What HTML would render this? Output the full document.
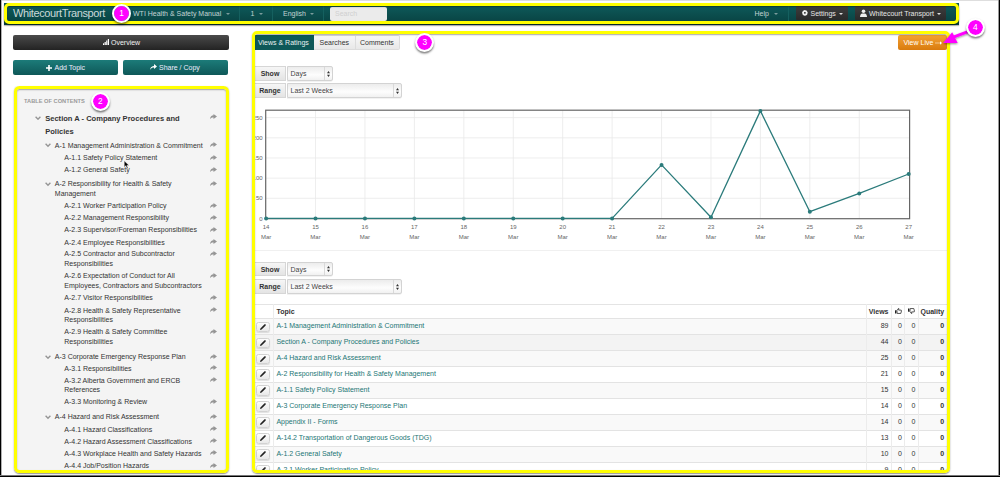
<!DOCTYPE html>
<html><head><meta charset="utf-8">
<style>
*{box-sizing:border-box;margin:0;padding:0}
html,body{width:1000px;height:477px;overflow:hidden;background:#fff}
body{position:relative;font-family:"Liberation Sans",sans-serif;font-size:7px;color:#333}
.a{position:absolute;white-space:nowrap}
.t{position:absolute;white-space:nowrap;line-height:10px;font-size:7px}
.nav{left:4px;top:3px;width:955px;height:21.5px;background:linear-gradient(#0f5d5e,#08403f);box-shadow:0 1px 1px rgba(0,0,0,.25)}
.navtxt{color:#c3d3d3}
.div1{position:absolute;top:3px;height:21px;width:1px;background:#0a4142;border-right:1px solid #15605f}
.caret{position:absolute;width:0;height:0;border-left:2px solid transparent;border-right:2px solid transparent;border-top:2.2px solid #7b9c9c}
.hl{position:absolute;border:3px solid #ffff00;box-shadow:0 1px 1.5px rgba(0,0,0,.45),inset 0 1px 1.5px rgba(0,0,0,.35)}
.circ{position:absolute;width:19px;height:19px;border-radius:50%;background:#ff00ff;background-clip:padding-box;border:2px solid #fff;box-shadow:0 1.5px 2px rgba(0,0,0,.5);color:#fff;font-size:8.4px;line-height:15.6px;text-align:center}
.btn-dark{background:linear-gradient(#4a4a4a,#232323);border-radius:2px}
.btn-teal{background:linear-gradient(#1c7b79,#0e5858);border-radius:2px}
.toc{left:14px;top:86px;width:215px;height:386px;background:#f4f4f4;border-radius:3px}
.sh{position:absolute;left:210px;width:7px;height:5px}
.chev{position:absolute;width:6px;height:4.5px}
.tocl{color:#333}
.lbl{position:absolute;background:linear-gradient(#f6f6f6,#e4e4e4);border:1px solid #d6d6d6;font-weight:bold;color:#333;font-size:7px;line-height:13.6px;text-align:center}
.sel{position:absolute;background:linear-gradient(#ececec,#fdfdfd 60%,#f1f1f1);border:1px solid #d3d3d3;border-radius:0 2px 2px 0;color:#444;font-size:7px;line-height:13.4px;padding-left:3px;box-shadow:0 0.5px 0.5px rgba(0,0,0,.1)}
.sel i{position:absolute;top:0;bottom:0;width:1px;background:#d9d9d9}
.row{position:absolute;left:255px;width:692px;height:16px;border-top:1px solid #e3e3e3}
.edit{position:absolute;left:255.8px;width:14.3px;height:10.5px;background:linear-gradient(#fdfdfd,#e9e9e9);border:1px solid #d2d2d2;border-radius:2.5px;box-shadow:0 1px 1px rgba(0,0,0,.12)}
.lnk{color:#237675}
.num{position:absolute;text-align:right;font-size:7px;line-height:10px;color:#333}
</style></head><body>

<!-- frame -->
<div class="a" style="left:0;top:0;width:1000px;height:1px;background:#dedede"></div>
<div class="a" style="left:0;top:0;width:1px;height:477px;background:#000"></div>
<div class="a" style="left:1px;top:0;width:1px;height:477px;background:#b0b0b0"></div>
<div class="a" style="left:999px;top:0;width:1px;height:477px;background:#000"></div>
<div class="a" style="left:998px;top:0;width:1px;height:477px;background:#9a9a9a"></div>
<div class="a" style="left:0;top:476px;width:1000px;height:1px;background:#000"></div>
<div class="a" style="left:0;top:475px;width:1000px;height:1px;background:#777"></div>

<!-- NAVBAR -->
<div class="a nav"></div>
<div class="t navtxt" style="left:13px;top:7px;font-size:11px;line-height:12px;letter-spacing:-0.38px;color:#c9d8d8">WhitecourtTransport</div>
<div class="t navtxt" style="left:133px;top:8.5px">WTI Health &amp; Safety Manual</div>
<div class="caret" style="left:225.5px;top:12.5px"></div>
<div class="div1" style="left:239px"></div>
<div class="t navtxt" style="left:250.5px;top:8.5px">1</div>
<div class="caret" style="left:258.5px;top:12.5px"></div>
<div class="div1" style="left:272px"></div>
<div class="t navtxt" style="left:283px;top:8.5px">English</div>
<div class="caret" style="left:310px;top:12.5px"></div>
<div class="div1" style="left:323px"></div>
<div class="a" style="left:330px;top:7px;width:57px;height:13.5px;background:#ebebeb;border-radius:2px"></div>
<div class="t" style="left:335px;top:8.5px;color:#d0d0d0">Search</div>

<div class="t navtxt" style="left:754.5px;top:8.5px">Help</div>
<div class="caret" style="left:773.5px;top:12.5px"></div>
<div class="div1" style="left:788px"></div>
<div class="a btn-dark" style="left:796px;top:6.3px;width:52px;height:13.6px;background:linear-gradient(#3e3e3e,#2a2a2a);border-radius:1px"></div>
<svg class="a" style="left:802.4px;top:9.9px" width="5.8" height="5.8" viewBox="0 0 14 14"><path fill="#eee" fill-rule="evenodd" d="M13.83,5.47 13.83,8.53 11.97,9.10 12.00,9.03 12.91,10.75 10.75,12.91 9.03,12.00 9.10,11.97 8.53,13.83 5.47,13.83 4.90,11.97 4.97,12.00 3.25,12.91 1.09,10.75 2.00,9.03 2.03,9.10 0.17,8.53 0.17,5.47 2.03,4.90 2.00,4.97 1.09,3.25 3.25,1.09 4.97,2.00 4.90,2.03 5.47,0.17 8.53,0.17 9.10,2.03 9.03,2.00 10.75,1.09 12.91,3.25 12.00,4.97 11.97,4.90z M7 4.9a2.1 2.1 0 1 0 0.01 0z"/></svg>
<div class="t" style="left:810.5px;top:8.5px;color:#e6e6e6">Settings</div>
<div class="caret" style="left:839px;top:12.5px;border-top-color:#ddd"></div>
<div class="a btn-dark" style="left:854.5px;top:6.3px;width:91.3px;height:13.6px;background:linear-gradient(#3e3e3e,#2a2a2a);border-radius:1px"></div>
<svg class="a" style="left:860px;top:9px" width="7" height="8" viewBox="0 0 14 16"><circle cx="7" cy="4.5" r="3.6" fill="#eee"/><path fill="#eee" d="M0 16c0-4 2-6.5 4.5-7h5c2.5.5 4.5 3 4.5 7z"/></svg>
<div class="t" style="left:869px;top:8.5px;color:#e6e6e6">Whitecourt Transport</div>
<div class="caret" style="left:936.5px;top:12.5px;border-top-color:#ddd"></div>

<div class="hl" style="left:4px;top:3px;width:955px;height:21px;border-radius:5px"></div>
<div class="circ" style="left:112.1px;top:4.1px">1</div>

<!-- SIDEBAR BUTTONS -->
<div class="a btn-dark" style="left:13px;top:35px;width:216px;height:15px"></div>
<svg class="a" style="left:103px;top:39px" width="6" height="6" viewBox="0 0 6 6"><rect x="0" y="4.3" width="1.2" height="1.7" fill="#fff"/><rect x="1.6" y="3" width="1.2" height="3" fill="#fff"/><rect x="3.2" y="1.5" width="1.2" height="4.5" fill="#fff"/><rect x="4.8" y="0" width="1.2" height="6" fill="#fff"/></svg>
<div class="t" style="left:111px;top:37.5px;color:#f0f0f0">Overview</div>

<div class="a btn-teal" style="left:13px;top:60px;width:104.5px;height:15px"></div>
<svg class="a" style="left:45.5px;top:64.5px" width="6" height="6" viewBox="0 0 6 6"><path d="M2.2 0h1.6v2.2H6v1.6H3.8V6H2.2V3.8H0V2.2h2.2z" fill="#fff"/></svg>
<div class="t" style="left:54.5px;top:62.5px;color:#eef">Add Topic</div>
<div class="a btn-teal" style="left:123px;top:60px;width:105px;height:15px"></div>
<svg class="a" style="left:150px;top:64px" width="7" height="6" viewBox="0 0 14 12"><path d="M0 12C1 6 4 4 8 4V0l6 5-6 5V7C5 7 2 8 0 12z" fill="#fff"/></svg>
<div class="t" style="left:159px;top:62.5px;color:#eef">Share / Copy</div>

<!-- TOC -->
<div class="a toc"></div>
<div class="t" style="left:24px;top:96.3px;font-size:5.7px;font-weight:bold;color:#9a9a9a">TABLE OF CONTENTS</div>

<div id="tocitems" style="position:absolute;left:0;top:0;width:230px;height:470px;overflow:hidden"><svg class="chev" style="left:35.0px;top:115.70px" width="6" height="4.5" viewBox="0 0 12 9"><polyline points="1.2,1.6 6,6.4 10.8,1.6" fill="none" stroke="#959595" stroke-width="2.8"/></svg><div class="t tocl" style="left:45.2px;top:113.57px;font-size:7.55px;font-weight:bold">Section A - Company Procedures and</div><div class="t tocl" style="left:45.2px;top:126.77px;font-size:7.55px;font-weight:bold">Policies</div><svg class="sh" style="top:114.40px" width="7" height="5" viewBox="0 0 14 10"><path d="M0 10.5C.3 5.5 2.8 2.6 7 2.6V0L14 5 7 10V7.2C3.8 7.2 1.8 8 0 10.5z" fill="#959595"/></svg><svg class="chev" style="left:44.6px;top:143.30px" width="6" height="4.5" viewBox="0 0 12 9"><polyline points="1.2,1.6 6,6.4 10.8,1.6" fill="none" stroke="#959595" stroke-width="2.8"/></svg><div class="t tocl" style="left:54.8px;top:140.57px;">A-1 Management Administration &amp; Commitment</div><svg class="sh" style="top:142.30px" width="7" height="5" viewBox="0 0 14 10"><path d="M0 10.5C.3 5.5 2.8 2.6 7 2.6V0L14 5 7 10V7.2C3.8 7.2 1.8 8 0 10.5z" fill="#959595"/></svg><div class="t tocl" style="left:64.3px;top:152.77px;">A-1.1 Safety Policy Statement</div><svg class="sh" style="top:154.50px" width="7" height="5" viewBox="0 0 14 10"><path d="M0 10.5C.3 5.5 2.8 2.6 7 2.6V0L14 5 7 10V7.2C3.8 7.2 1.8 8 0 10.5z" fill="#959595"/></svg><div class="t tocl" style="left:64.3px;top:164.77px;">A-1.2 General Safety</div><svg class="sh" style="top:166.50px" width="7" height="5" viewBox="0 0 14 10"><path d="M0 10.5C.3 5.5 2.8 2.6 7 2.6V0L14 5 7 10V7.2C3.8 7.2 1.8 8 0 10.5z" fill="#959595"/></svg><svg class="chev" style="left:44.6px;top:182.20px" width="6" height="4.5" viewBox="0 0 12 9"><polyline points="1.2,1.6 6,6.4 10.8,1.6" fill="none" stroke="#959595" stroke-width="2.8"/></svg><div class="t tocl" style="left:54.8px;top:179.47px;">A-2 Responsibility for Health &amp; Safety</div><div class="t tocl" style="left:54.8px;top:189.07px;">Management</div><svg class="sh" style="top:181.20px" width="7" height="5" viewBox="0 0 14 10"><path d="M0 10.5C.3 5.5 2.8 2.6 7 2.6V0L14 5 7 10V7.2C3.8 7.2 1.8 8 0 10.5z" fill="#959595"/></svg><div class="t tocl" style="left:64.3px;top:200.97px;">A-2.1 Worker Participation Policy</div><svg class="sh" style="top:202.70px" width="7" height="5" viewBox="0 0 14 10"><path d="M0 10.5C.3 5.5 2.8 2.6 7 2.6V0L14 5 7 10V7.2C3.8 7.2 1.8 8 0 10.5z" fill="#959595"/></svg><div class="t tocl" style="left:64.3px;top:213.27px;">A-2.2 Management Responsibility</div><svg class="sh" style="top:215.00px" width="7" height="5" viewBox="0 0 14 10"><path d="M0 10.5C.3 5.5 2.8 2.6 7 2.6V0L14 5 7 10V7.2C3.8 7.2 1.8 8 0 10.5z" fill="#959595"/></svg><div class="t tocl" style="left:64.3px;top:225.47px;">A-2.3 Supervisor/Foreman Responsibilities</div><svg class="sh" style="top:227.20px" width="7" height="5" viewBox="0 0 14 10"><path d="M0 10.5C.3 5.5 2.8 2.6 7 2.6V0L14 5 7 10V7.2C3.8 7.2 1.8 8 0 10.5z" fill="#959595"/></svg><div class="t tocl" style="left:64.3px;top:237.57px;">A-2.4 Employee Responsibilities</div><svg class="sh" style="top:239.30px" width="7" height="5" viewBox="0 0 14 10"><path d="M0 10.5C.3 5.5 2.8 2.6 7 2.6V0L14 5 7 10V7.2C3.8 7.2 1.8 8 0 10.5z" fill="#959595"/></svg><div class="t tocl" style="left:64.3px;top:249.37px;">A-2.5 Contractor and Subcontractor</div><div class="t tocl" style="left:64.3px;top:258.97px;">Responsibilities</div><svg class="sh" style="top:251.10px" width="7" height="5" viewBox="0 0 14 10"><path d="M0 10.5C.3 5.5 2.8 2.6 7 2.6V0L14 5 7 10V7.2C3.8 7.2 1.8 8 0 10.5z" fill="#959595"/></svg><div class="t tocl" style="left:64.3px;top:271.37px;">A-2.6 Expectation of Conduct for All</div><div class="t tocl" style="left:64.3px;top:280.97px;">Employees, Contractors and Subcontractors</div><svg class="sh" style="top:273.10px" width="7" height="5" viewBox="0 0 14 10"><path d="M0 10.5C.3 5.5 2.8 2.6 7 2.6V0L14 5 7 10V7.2C3.8 7.2 1.8 8 0 10.5z" fill="#959595"/></svg><div class="t tocl" style="left:64.3px;top:293.07px;">A-2.7 Visitor Responsibilities</div><svg class="sh" style="top:294.80px" width="7" height="5" viewBox="0 0 14 10"><path d="M0 10.5C.3 5.5 2.8 2.6 7 2.6V0L14 5 7 10V7.2C3.8 7.2 1.8 8 0 10.5z" fill="#959595"/></svg><div class="t tocl" style="left:64.3px;top:305.57px;">A-2.8 Health &amp; Safety Representative</div><div class="t tocl" style="left:64.3px;top:315.17px;">Responsibilities</div><svg class="sh" style="top:307.30px" width="7" height="5" viewBox="0 0 14 10"><path d="M0 10.5C.3 5.5 2.8 2.6 7 2.6V0L14 5 7 10V7.2C3.8 7.2 1.8 8 0 10.5z" fill="#959595"/></svg><div class="t tocl" style="left:64.3px;top:327.07px;">A-2.9 Health &amp; Safety Committee</div><div class="t tocl" style="left:64.3px;top:336.67px;">Responsibilities</div><svg class="sh" style="top:328.80px" width="7" height="5" viewBox="0 0 14 10"><path d="M0 10.5C.3 5.5 2.8 2.6 7 2.6V0L14 5 7 10V7.2C3.8 7.2 1.8 8 0 10.5z" fill="#959595"/></svg><svg class="chev" style="left:44.6px;top:354.50px" width="6" height="4.5" viewBox="0 0 12 9"><polyline points="1.2,1.6 6,6.4 10.8,1.6" fill="none" stroke="#959595" stroke-width="2.8"/></svg><div class="t tocl" style="left:54.8px;top:351.77px;">A-3 Corporate Emergency Response Plan</div><svg class="sh" style="top:353.50px" width="7" height="5" viewBox="0 0 14 10"><path d="M0 10.5C.3 5.5 2.8 2.6 7 2.6V0L14 5 7 10V7.2C3.8 7.2 1.8 8 0 10.5z" fill="#959595"/></svg><div class="t tocl" style="left:64.3px;top:363.67px;">A-3.1 Responsibilities</div><svg class="sh" style="top:365.40px" width="7" height="5" viewBox="0 0 14 10"><path d="M0 10.5C.3 5.5 2.8 2.6 7 2.6V0L14 5 7 10V7.2C3.8 7.2 1.8 8 0 10.5z" fill="#959595"/></svg><div class="t tocl" style="left:64.3px;top:375.67px;">A-3.2 Alberta Government and ERCB</div><div class="t tocl" style="left:64.3px;top:385.27px;">References</div><svg class="sh" style="top:377.40px" width="7" height="5" viewBox="0 0 14 10"><path d="M0 10.5C.3 5.5 2.8 2.6 7 2.6V0L14 5 7 10V7.2C3.8 7.2 1.8 8 0 10.5z" fill="#959595"/></svg><div class="t tocl" style="left:64.3px;top:397.07px;">A-3.3 Monitoring &amp; Review</div><svg class="sh" style="top:398.80px" width="7" height="5" viewBox="0 0 14 10"><path d="M0 10.5C.3 5.5 2.8 2.6 7 2.6V0L14 5 7 10V7.2C3.8 7.2 1.8 8 0 10.5z" fill="#959595"/></svg><svg class="chev" style="left:44.6px;top:415.10px" width="6" height="4.5" viewBox="0 0 12 9"><polyline points="1.2,1.6 6,6.4 10.8,1.6" fill="none" stroke="#959595" stroke-width="2.8"/></svg><div class="t tocl" style="left:54.8px;top:412.37px;">A-4 Hazard and Risk Assessment</div><svg class="sh" style="top:414.10px" width="7" height="5" viewBox="0 0 14 10"><path d="M0 10.5C.3 5.5 2.8 2.6 7 2.6V0L14 5 7 10V7.2C3.8 7.2 1.8 8 0 10.5z" fill="#959595"/></svg><div class="t tocl" style="left:64.3px;top:424.67px;">A-4.1 Hazard Classifications</div><svg class="sh" style="top:426.40px" width="7" height="5" viewBox="0 0 14 10"><path d="M0 10.5C.3 5.5 2.8 2.6 7 2.6V0L14 5 7 10V7.2C3.8 7.2 1.8 8 0 10.5z" fill="#959595"/></svg><div class="t tocl" style="left:64.3px;top:436.67px;">A-4.2 Hazard Assessment Classifications</div><svg class="sh" style="top:438.40px" width="7" height="5" viewBox="0 0 14 10"><path d="M0 10.5C.3 5.5 2.8 2.6 7 2.6V0L14 5 7 10V7.2C3.8 7.2 1.8 8 0 10.5z" fill="#959595"/></svg><div class="t tocl" style="left:64.3px;top:448.67px;">A-4.3 Workplace Health and Safety Hazards</div><svg class="sh" style="top:450.40px" width="7" height="5" viewBox="0 0 14 10"><path d="M0 10.5C.3 5.5 2.8 2.6 7 2.6V0L14 5 7 10V7.2C3.8 7.2 1.8 8 0 10.5z" fill="#959595"/></svg><div class="t tocl" style="left:64.3px;top:461.07px;">A-4.4 Job/Position Hazards</div><svg class="sh" style="top:462.80px" width="7" height="5" viewBox="0 0 14 10"><path d="M0 10.5C.3 5.5 2.8 2.6 7 2.6V0L14 5 7 10V7.2C3.8 7.2 1.8 8 0 10.5z" fill="#959595"/></svg></div>

<div class="hl" style="left:14px;top:86px;width:215px;height:386.5px;border-radius:5.5px"></div>
<div class="circ" style="left:90.8px;top:91.5px">2</div>

<!-- MAIN PANEL -->
<div class="a" style="left:255px;top:35px;width:59px;height:14.5px;background:#0e5858"></div>
<div class="t" style="left:258px;top:37.5px;color:#e8f0f0">Views &amp; Ratings</div>
<div class="a" style="left:314px;top:35px;width:85.5px;height:14.5px;background:linear-gradient(#f7f7f7,#e8e8e8);border:1px solid #dcdcdc;border-left:0;border-radius:0 2px 2px 0"></div>
<div class="a" style="left:354.5px;top:35px;width:1px;height:14.5px;background:#dcdcdc"></div>
<div class="t" style="left:319.5px;top:37.5px;color:#333">Searches</div>
<div class="t" style="left:360px;top:37.5px;color:#333">Comments</div>

<div class="a" style="left:897.5px;top:35px;width:49.5px;height:15px;background:linear-gradient(#f4a234,#d97b0e);border-radius:2px"></div>
<div class="t" style="left:903.5px;top:37.5px;color:#fff">View Live</div><svg class="a" style="left:934.5px;top:40.5px" width="7" height="4" viewBox="0 0 14 8"><path d="M0 3.3h10V0.5L14 4 10 7.5V4.7H0z" fill="#fff"/></svg>

<!-- controls 1 -->
<div class="lbl" style="left:254px;top:66px;width:32px;height:14.5px">Show</div>
<div class="sel" style="left:286.5px;top:66px;width:46px;height:14.5px">Days<i style="left:36.5px"></i><svg style="position:absolute;top:3.6px;left:39.3px" width="3" height="6" viewBox="0 0 6 12"><path d="M3 0 6 4.3H0z M3 12 6 7.7H0z" fill="#333"/></svg></div>
<div class="lbl" style="left:254px;top:83px;width:32px;height:14.5px">Range</div>
<div class="sel" style="left:286.5px;top:83px;width:115.5px;height:14.5px">Last 2 Weeks<i style="left:105.5px"></i><svg style="position:absolute;top:3.6px;left:108.3px" width="3" height="6" viewBox="0 0 6 12"><path d="M3 0 6 4.3H0z M3 12 6 7.7H0z" fill="#333"/></svg></div>

<!-- chart -->
<svg class="a" style="left:0;top:0" width="1000" height="477" id="chart"><line x1="265.7" x2="909.6" y1="198.32" y2="198.32" stroke="#e8e8e8" stroke-width="0.8"/><line x1="265.7" x2="909.6" y1="178.15" y2="178.15" stroke="#e8e8e8" stroke-width="0.8"/><line x1="265.7" x2="909.6" y1="157.97" y2="157.97" stroke="#e8e8e8" stroke-width="0.8"/><line x1="265.7" x2="909.6" y1="137.80" y2="137.80" stroke="#e8e8e8" stroke-width="0.8"/><line x1="265.7" x2="909.6" y1="117.62" y2="117.62" stroke="#e8e8e8" stroke-width="0.8"/><line x1="315.53" x2="315.53" y1="110.2" y2="218.7" stroke="#e8e8e8" stroke-width="0.8"/><line x1="364.96" x2="364.96" y1="110.2" y2="218.7" stroke="#e8e8e8" stroke-width="0.8"/><line x1="414.39" x2="414.39" y1="110.2" y2="218.7" stroke="#e8e8e8" stroke-width="0.8"/><line x1="463.82" x2="463.82" y1="110.2" y2="218.7" stroke="#e8e8e8" stroke-width="0.8"/><line x1="513.25" x2="513.25" y1="110.2" y2="218.7" stroke="#e8e8e8" stroke-width="0.8"/><line x1="562.68" x2="562.68" y1="110.2" y2="218.7" stroke="#e8e8e8" stroke-width="0.8"/><line x1="612.11" x2="612.11" y1="110.2" y2="218.7" stroke="#e8e8e8" stroke-width="0.8"/><line x1="661.54" x2="661.54" y1="110.2" y2="218.7" stroke="#e8e8e8" stroke-width="0.8"/><line x1="710.97" x2="710.97" y1="110.2" y2="218.7" stroke="#e8e8e8" stroke-width="0.8"/><line x1="760.40" x2="760.40" y1="110.2" y2="218.7" stroke="#e8e8e8" stroke-width="0.8"/><line x1="809.83" x2="809.83" y1="110.2" y2="218.7" stroke="#e8e8e8" stroke-width="0.8"/><line x1="859.26" x2="859.26" y1="110.2" y2="218.7" stroke="#e8e8e8" stroke-width="0.8"/><rect x="265.7" y="110.2" width="643.90" height="108.50" fill="none" stroke="#666" stroke-width="1.2"/><polyline fill="none" stroke="#2b7b7b" stroke-width="1.3" stroke-linejoin="round" points="266.10,218.40 315.53,218.40 364.96,218.40 414.39,218.40 463.82,218.40 513.25,218.40 562.68,218.40 612.11,218.40 661.54,164.92 710.97,217.21 760.40,110.89 809.83,211.68 859.26,193.40 908.69,173.99"/><circle cx="266.10" cy="218.40" r="2" fill="#2b7b7b"/><circle cx="315.53" cy="218.40" r="2" fill="#2b7b7b"/><circle cx="364.96" cy="218.40" r="2" fill="#2b7b7b"/><circle cx="414.39" cy="218.40" r="2" fill="#2b7b7b"/><circle cx="463.82" cy="218.40" r="2" fill="#2b7b7b"/><circle cx="513.25" cy="218.40" r="2" fill="#2b7b7b"/><circle cx="562.68" cy="218.40" r="2" fill="#2b7b7b"/><circle cx="612.11" cy="218.40" r="2" fill="#2b7b7b"/><circle cx="661.54" cy="164.92" r="2" fill="#2b7b7b"/><circle cx="710.97" cy="217.21" r="2" fill="#2b7b7b"/><circle cx="760.40" cy="110.89" r="2" fill="#2b7b7b"/><circle cx="809.83" cy="211.68" r="2" fill="#2b7b7b"/><circle cx="859.26" cy="193.40" r="2" fill="#2b7b7b"/><circle cx="908.69" cy="173.99" r="2" fill="#2b7b7b"/><text x="262.6" y="220.50" text-anchor="end" font-size="6" fill="#666" font-family="Liberation Sans">0</text><text x="262.6" y="200.32" text-anchor="end" font-size="6" fill="#666" font-family="Liberation Sans">50</text><text x="262.6" y="180.15" text-anchor="end" font-size="6" fill="#666" font-family="Liberation Sans">100</text><text x="262.6" y="159.97" text-anchor="end" font-size="6" fill="#666" font-family="Liberation Sans">150</text><text x="262.6" y="139.80" text-anchor="end" font-size="6" fill="#666" font-family="Liberation Sans">200</text><text x="262.6" y="119.62" text-anchor="end" font-size="6" fill="#666" font-family="Liberation Sans">250</text><text x="266.10" y="229" text-anchor="middle" font-size="6" fill="#666" font-family="Liberation Sans">14</text><text x="266.10" y="238.5" text-anchor="middle" font-size="6" fill="#666" font-family="Liberation Sans">Mar</text><text x="315.53" y="229" text-anchor="middle" font-size="6" fill="#666" font-family="Liberation Sans">15</text><text x="315.53" y="238.5" text-anchor="middle" font-size="6" fill="#666" font-family="Liberation Sans">Mar</text><text x="364.96" y="229" text-anchor="middle" font-size="6" fill="#666" font-family="Liberation Sans">16</text><text x="364.96" y="238.5" text-anchor="middle" font-size="6" fill="#666" font-family="Liberation Sans">Mar</text><text x="414.39" y="229" text-anchor="middle" font-size="6" fill="#666" font-family="Liberation Sans">17</text><text x="414.39" y="238.5" text-anchor="middle" font-size="6" fill="#666" font-family="Liberation Sans">Mar</text><text x="463.82" y="229" text-anchor="middle" font-size="6" fill="#666" font-family="Liberation Sans">18</text><text x="463.82" y="238.5" text-anchor="middle" font-size="6" fill="#666" font-family="Liberation Sans">Mar</text><text x="513.25" y="229" text-anchor="middle" font-size="6" fill="#666" font-family="Liberation Sans">19</text><text x="513.25" y="238.5" text-anchor="middle" font-size="6" fill="#666" font-family="Liberation Sans">Mar</text><text x="562.68" y="229" text-anchor="middle" font-size="6" fill="#666" font-family="Liberation Sans">20</text><text x="562.68" y="238.5" text-anchor="middle" font-size="6" fill="#666" font-family="Liberation Sans">Mar</text><text x="612.11" y="229" text-anchor="middle" font-size="6" fill="#666" font-family="Liberation Sans">21</text><text x="612.11" y="238.5" text-anchor="middle" font-size="6" fill="#666" font-family="Liberation Sans">Mar</text><text x="661.54" y="229" text-anchor="middle" font-size="6" fill="#666" font-family="Liberation Sans">22</text><text x="661.54" y="238.5" text-anchor="middle" font-size="6" fill="#666" font-family="Liberation Sans">Mar</text><text x="710.97" y="229" text-anchor="middle" font-size="6" fill="#666" font-family="Liberation Sans">23</text><text x="710.97" y="238.5" text-anchor="middle" font-size="6" fill="#666" font-family="Liberation Sans">Mar</text><text x="760.40" y="229" text-anchor="middle" font-size="6" fill="#666" font-family="Liberation Sans">24</text><text x="760.40" y="238.5" text-anchor="middle" font-size="6" fill="#666" font-family="Liberation Sans">Mar</text><text x="809.83" y="229" text-anchor="middle" font-size="6" fill="#666" font-family="Liberation Sans">25</text><text x="809.83" y="238.5" text-anchor="middle" font-size="6" fill="#666" font-family="Liberation Sans">Mar</text><text x="859.26" y="229" text-anchor="middle" font-size="6" fill="#666" font-family="Liberation Sans">26</text><text x="859.26" y="238.5" text-anchor="middle" font-size="6" fill="#666" font-family="Liberation Sans">Mar</text><text x="908.69" y="229" text-anchor="middle" font-size="6" fill="#666" font-family="Liberation Sans">27</text><text x="908.69" y="238.5" text-anchor="middle" font-size="6" fill="#666" font-family="Liberation Sans">Mar</text></svg>

<div class="a" style="left:255px;top:250px;width:692px;height:1px;background:#f0f0f0"></div>

<!-- controls 2 -->
<div class="lbl" style="left:254px;top:261.5px;width:32px;height:14.5px">Show</div>
<div class="sel" style="left:286.5px;top:261.5px;width:46px;height:14.5px">Days<i style="left:36.5px"></i><svg style="position:absolute;top:3.6px;left:39.3px" width="3" height="6" viewBox="0 0 6 12"><path d="M3 0 6 4.3H0z M3 12 6 7.7H0z" fill="#333"/></svg></div>
<div class="lbl" style="left:254px;top:279px;width:32px;height:14.5px">Range</div>
<div class="sel" style="left:286.5px;top:279px;width:115.5px;height:14.5px">Last 2 Weeks<i style="left:105.5px"></i><svg style="position:absolute;top:3.6px;left:108.3px" width="3" height="6" viewBox="0 0 6 12"><path d="M3 0 6 4.3H0z M3 12 6 7.7H0z" fill="#333"/></svg></div>

<!-- table -->
<div id="table" style="position:absolute;left:0;top:0;width:1000px;height:471px;overflow:hidden"><div class="a" style="left:255px;top:304px;width:692px;height:1px;background:#e4e4e4"></div><div class="t" style="left:276.4px;top:306.57px;font-weight:bold;color:#333">Topic</div><div class="num" style="left:860px;width:28.5px;top:306.57px;font-weight:bold;color:#333">Views</div><div class="num" style="left:900px;width:44.2px;top:306.57px;font-weight:bold;color:#333">Quality</div><svg class="a" style="left:895px;top:307.8px" width="7" height="6" viewBox="0 0 14 12"><rect x="0" y="4.6" width="2.8" height="6.4" fill="#222"/><path d="M3.8 5.2 6.6 1.2 7.6.9 7.3 4.2H12.4L13 5.6 11.6 10.9H4.4z" fill="none" stroke="#222" stroke-width="1.5" stroke-linejoin="round"/></svg><svg class="a" style="left:908px;top:308.2px" width="7" height="6" viewBox="0 0 14 12"><g transform="matrix(1 0 0 -1 0 12)"><rect x="0" y="4.6" width="2.8" height="6.4" fill="#222"/><path d="M3.8 5.2 6.6 1.2 7.6.9 7.3 4.2H12.4L13 5.6 11.6 10.9H4.4z" fill="none" stroke="#222" stroke-width="1.5" stroke-linejoin="round"/></g></svg><div class="a" style="left:255px;top:318.40px;width:692px;height:15.93px;background:#f9f9f9;border-top:1px solid #e3e3e3"></div><div class="edit" style="top:321.70px"></div><svg class="a" style="left:260px;top:323.70px" width="6" height="6" viewBox="0 0 12 12"><path d="M0 12l.8-3.2L8.6 1l2.4 2.4-7.8 7.8z" fill="#222"/><path d="M9.4.2 10 0l2 2-.2.6-.8.8L8.6 1z" fill="#222"/></svg><div class="t lnk" style="left:276.4px;top:321.37px">A-1 Management Administration &amp; Commitment</div><div class="num" style="left:860px;width:28.5px;top:321.37px;color:#333">89</div><div class="num" style="left:890px;width:12px;top:321.37px">0</div><div class="num" style="left:903px;width:12.5px;top:321.37px">0</div><div class="num" style="left:920px;width:24.2px;top:321.37px;font-weight:bold;color:#333">0</div><div class="a" style="left:255px;top:334.33px;width:692px;height:15.93px;background:#f3f3f3;border-top:1px solid #e3e3e3"></div><div class="edit" style="top:337.63px"></div><svg class="a" style="left:260px;top:339.63px" width="6" height="6" viewBox="0 0 12 12"><path d="M0 12l.8-3.2L8.6 1l2.4 2.4-7.8 7.8z" fill="#222"/><path d="M9.4.2 10 0l2 2-.2.6-.8.8L8.6 1z" fill="#222"/></svg><div class="t lnk" style="left:276.4px;top:337.30px">Section A - Company Procedures and Policies</div><div class="num" style="left:860px;width:28.5px;top:337.30px;color:#333">44</div><div class="num" style="left:890px;width:12px;top:337.30px">0</div><div class="num" style="left:903px;width:12.5px;top:337.30px">0</div><div class="num" style="left:920px;width:24.2px;top:337.30px;font-weight:bold;color:#333">0</div><div class="a" style="left:255px;top:350.26px;width:692px;height:15.93px;background:#f9f9f9;border-top:1px solid #e3e3e3"></div><div class="edit" style="top:353.56px"></div><svg class="a" style="left:260px;top:355.56px" width="6" height="6" viewBox="0 0 12 12"><path d="M0 12l.8-3.2L8.6 1l2.4 2.4-7.8 7.8z" fill="#222"/><path d="M9.4.2 10 0l2 2-.2.6-.8.8L8.6 1z" fill="#222"/></svg><div class="t lnk" style="left:276.4px;top:353.23px">A-4 Hazard and Risk Assessment</div><div class="num" style="left:860px;width:28.5px;top:353.23px;color:#333">25</div><div class="num" style="left:890px;width:12px;top:353.23px">0</div><div class="num" style="left:903px;width:12.5px;top:353.23px">0</div><div class="num" style="left:920px;width:24.2px;top:353.23px;font-weight:bold;color:#333">0</div><div class="a" style="left:255px;top:366.19px;width:692px;height:15.93px;background:#fff;border-top:1px solid #e3e3e3"></div><div class="edit" style="top:369.49px"></div><svg class="a" style="left:260px;top:371.49px" width="6" height="6" viewBox="0 0 12 12"><path d="M0 12l.8-3.2L8.6 1l2.4 2.4-7.8 7.8z" fill="#222"/><path d="M9.4.2 10 0l2 2-.2.6-.8.8L8.6 1z" fill="#222"/></svg><div class="t lnk" style="left:276.4px;top:369.16px">A-2 Responsibility for Health &amp; Safety Management</div><div class="num" style="left:860px;width:28.5px;top:369.16px;color:#333">21</div><div class="num" style="left:890px;width:12px;top:369.16px">0</div><div class="num" style="left:903px;width:12.5px;top:369.16px">0</div><div class="num" style="left:920px;width:24.2px;top:369.16px;font-weight:bold;color:#333">0</div><div class="a" style="left:255px;top:382.12px;width:692px;height:15.93px;background:#f9f9f9;border-top:1px solid #e3e3e3"></div><div class="edit" style="top:385.42px"></div><svg class="a" style="left:260px;top:387.42px" width="6" height="6" viewBox="0 0 12 12"><path d="M0 12l.8-3.2L8.6 1l2.4 2.4-7.8 7.8z" fill="#222"/><path d="M9.4.2 10 0l2 2-.2.6-.8.8L8.6 1z" fill="#222"/></svg><div class="t lnk" style="left:276.4px;top:385.09px">A-1.1 Safety Policy Statement</div><div class="num" style="left:860px;width:28.5px;top:385.09px;color:#333">15</div><div class="num" style="left:890px;width:12px;top:385.09px">0</div><div class="num" style="left:903px;width:12.5px;top:385.09px">0</div><div class="num" style="left:920px;width:24.2px;top:385.09px;font-weight:bold;color:#333">0</div><div class="a" style="left:255px;top:398.05px;width:692px;height:15.93px;background:#fff;border-top:1px solid #e3e3e3"></div><div class="edit" style="top:401.35px"></div><svg class="a" style="left:260px;top:403.35px" width="6" height="6" viewBox="0 0 12 12"><path d="M0 12l.8-3.2L8.6 1l2.4 2.4-7.8 7.8z" fill="#222"/><path d="M9.4.2 10 0l2 2-.2.6-.8.8L8.6 1z" fill="#222"/></svg><div class="t lnk" style="left:276.4px;top:401.02px">A-3 Corporate Emergency Response Plan</div><div class="num" style="left:860px;width:28.5px;top:401.02px;color:#333">14</div><div class="num" style="left:890px;width:12px;top:401.02px">0</div><div class="num" style="left:903px;width:12.5px;top:401.02px">0</div><div class="num" style="left:920px;width:24.2px;top:401.02px;font-weight:bold;color:#333">0</div><div class="a" style="left:255px;top:413.98px;width:692px;height:15.93px;background:#f9f9f9;border-top:1px solid #e3e3e3"></div><div class="edit" style="top:417.28px"></div><svg class="a" style="left:260px;top:419.28px" width="6" height="6" viewBox="0 0 12 12"><path d="M0 12l.8-3.2L8.6 1l2.4 2.4-7.8 7.8z" fill="#222"/><path d="M9.4.2 10 0l2 2-.2.6-.8.8L8.6 1z" fill="#222"/></svg><div class="t lnk" style="left:276.4px;top:416.95px">Appendix II - Forms</div><div class="num" style="left:860px;width:28.5px;top:416.95px;color:#333">14</div><div class="num" style="left:890px;width:12px;top:416.95px">0</div><div class="num" style="left:903px;width:12.5px;top:416.95px">0</div><div class="num" style="left:920px;width:24.2px;top:416.95px;font-weight:bold;color:#333">0</div><div class="a" style="left:255px;top:429.91px;width:692px;height:15.93px;background:#fff;border-top:1px solid #e3e3e3"></div><div class="edit" style="top:433.21px"></div><svg class="a" style="left:260px;top:435.21px" width="6" height="6" viewBox="0 0 12 12"><path d="M0 12l.8-3.2L8.6 1l2.4 2.4-7.8 7.8z" fill="#222"/><path d="M9.4.2 10 0l2 2-.2.6-.8.8L8.6 1z" fill="#222"/></svg><div class="t lnk" style="left:276.4px;top:432.88px">A-14.2 Transportation of Dangerous Goods (TDG)</div><div class="num" style="left:860px;width:28.5px;top:432.88px;color:#333">13</div><div class="num" style="left:890px;width:12px;top:432.88px">0</div><div class="num" style="left:903px;width:12.5px;top:432.88px">0</div><div class="num" style="left:920px;width:24.2px;top:432.88px;font-weight:bold;color:#333">0</div><div class="a" style="left:255px;top:445.84px;width:692px;height:15.93px;background:#f9f9f9;border-top:1px solid #e3e3e3"></div><div class="edit" style="top:449.14px"></div><svg class="a" style="left:260px;top:451.14px" width="6" height="6" viewBox="0 0 12 12"><path d="M0 12l.8-3.2L8.6 1l2.4 2.4-7.8 7.8z" fill="#222"/><path d="M9.4.2 10 0l2 2-.2.6-.8.8L8.6 1z" fill="#222"/></svg><div class="t lnk" style="left:276.4px;top:448.81px">A-1.2 General Safety</div><div class="num" style="left:860px;width:28.5px;top:448.81px;color:#333">10</div><div class="num" style="left:890px;width:12px;top:448.81px">0</div><div class="num" style="left:903px;width:12.5px;top:448.81px">0</div><div class="num" style="left:920px;width:24.2px;top:448.81px;font-weight:bold;color:#333">0</div><div class="a" style="left:255px;top:461.77px;width:692px;height:15.93px;background:#fff;border-top:1px solid #e3e3e3"></div><div class="edit" style="top:465.07px"></div><svg class="a" style="left:260px;top:467.07px" width="6" height="6" viewBox="0 0 12 12"><path d="M0 12l.8-3.2L8.6 1l2.4 2.4-7.8 7.8z" fill="#222"/><path d="M9.4.2 10 0l2 2-.2.6-.8.8L8.6 1z" fill="#222"/></svg><div class="t lnk" style="left:276.4px;top:464.74px">A-2.1 Worker Participation Policy</div><div class="num" style="left:860px;width:28.5px;top:464.74px;color:#333">9</div><div class="num" style="left:890px;width:12px;top:464.74px">0</div><div class="num" style="left:903px;width:12.5px;top:464.74px">0</div><div class="num" style="left:920px;width:24.2px;top:464.74px;font-weight:bold;color:#333">0</div><div class="a" style="left:272.8px;top:304px;width:1px;height:170px;background:#ececec"></div><div class="a" style="left:866.4px;top:304px;width:1px;height:170px;background:#ececec"></div><div class="a" style="left:890.9px;top:304px;width:1px;height:170px;background:#ececec"></div><div class="a" style="left:903.8px;top:304px;width:1px;height:170px;background:#ececec"></div><div class="a" style="left:917.6px;top:304px;width:1px;height:170px;background:#ececec"></div></div>

<div class="hl" style="left:252px;top:31px;width:698px;height:442px;border-radius:5px"></div>
<div class="circ" style="left:415.3px;top:32.8px">3</div>
<svg class="a" style="left:0;top:0;overflow:visible" width="1000" height="477"><defs><filter id="ds" x="-50%" y="-50%" width="200%" height="200%"><feGaussianBlur in="SourceAlpha" stdDeviation="0.8"/><feOffset dy="1" result="b"/><feComponentTransfer><feFuncA type="linear" slope="0.45"/></feComponentTransfer><feMerge><feMergeNode/><feMergeNode in="SourceGraphic"/></feMerge></filter></defs>
<g filter="url(#ds)"><line x1="968" y1="31.6" x2="952" y2="37.6" stroke="#ff00ff" stroke-width="3"/><path d="M943.1 42.9 952.2 32.2 957.7 42.9z" fill="#ff00ff"/></g>
<path d="M124.2 160.7v6.6l1.6-1.5 1.2 2.6 1.1-.5-1.2-2.5h2.2z" fill="#000" stroke="#fff" stroke-width="0.5"/></svg>
<div class="circ" style="left:965.8px;top:18.2px">4</div>
</body></html>
